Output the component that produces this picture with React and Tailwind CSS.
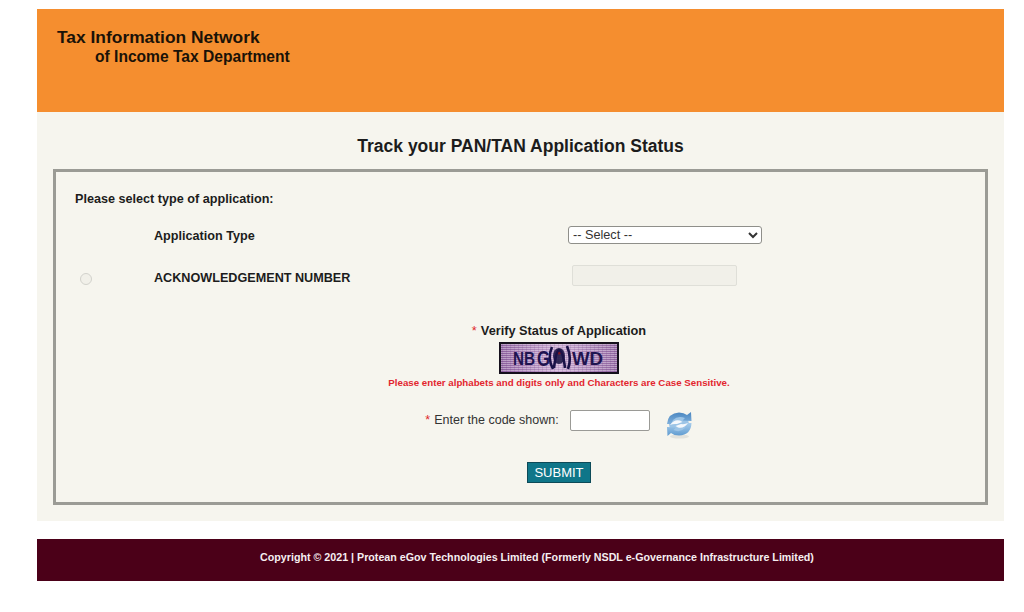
const captchaLines = Array.from({ length: 14 }, (_, i) => i * 2 + 2);
const captchaCols = Array.from({ length: 29 }, (_, i) => i * 4 + 3);

const Captcha = () => (
  <svg width="120" height="32" viewBox="0 0 120 32" className="block">
    <defs>
      <linearGradient id="capBg" x1="0" y1="0" x2="1" y2="0">
        <stop offset="0" stopColor="#8d5f9f" />
        <stop offset="0.5" stopColor="#c9a9d2" />
        <stop offset="1" stopColor="#8f639f" />
      </linearGradient>
    </defs>
    <rect width="120" height="32" fill="#15101c" />
    <rect x="2" y="2" width="116" height="28" fill="url(#capBg)" />
    {captchaLines.map((y) => (
      <rect key={y} x="2" y={y} width="116" height="0.8" fill="#f6ecf8" opacity="0.55" />
    ))}
    {captchaCols.map((x) => (
      <rect key={x} x={x} y="2" width="0.5" height="28" fill="#5d3a70" opacity="0.3" />
    ))}
    <text x="14" y="23" fontFamily="'Liberation Sans', sans-serif" fontWeight="700" fontSize="18" fill="#1f1450" textLength="22" lengthAdjust="spacingAndGlyphs">NB</text>
    <text x="38" y="24" fontFamily="'Liberation Sans', sans-serif" fontWeight="700" fontSize="22" fill="#1f1450" textLength="13" lengthAdjust="spacingAndGlyphs">G</text>
    <ellipse cx="60" cy="14" rx="6" ry="8" fill="#15103f" opacity="0.85" />
    <circle cx="60" cy="10" r="2.5" fill="#7a1522" />
    <path d="M53 5 Q48 16 54 27 M68 4 Q73 16 69 27 M55 26 Q57 9 60 8 Q64 9 66 26" fill="none" stroke="#1a1248" strokeWidth="2.6" />
    <text x="73" y="23" fontFamily="'Liberation Sans', sans-serif" fontWeight="700" fontSize="18" fill="#1f1450" textLength="31" lengthAdjust="spacingAndGlyphs">WD</text>
  </svg>
);

const RefreshIcon = () => (
  <svg width="27" height="28" viewBox="0 0 27 28" className="block">
    <defs>
      <linearGradient id="refTop" x1="0" y1="0" x2="0" y2="1">
        <stop offset="0" stopColor="#4a86c0" />
        <stop offset="1" stopColor="#7fb0dc" />
      </linearGradient>
      <linearGradient id="refBottom" x1="0" y1="0" x2="0" y2="1">
        <stop offset="0" stopColor="#a8cdec" />
        <stop offset="1" stopColor="#5f9bd0" />
      </linearGradient>
    </defs>
    <ellipse cx="13.5" cy="25.5" rx="9.5" ry="2" fill="#e2e2dc" />
    <circle cx="13" cy="13" r="10" fill="#9cc4e6" />
    {/* upper arrow */}
    <path d="M1 13 Q2 2 13 1.5 Q18 1.5 21 4 L25 1 L25.5 10 L16.5 9.5 L19 7 Q12 4 7 9 L5 13 Z" fill="url(#refTop)" />
    {/* lower arrow */}
    <path d="M25.5 12 Q25 24 13 24.5 Q8 24.5 5 22 L1.5 25 L1 16 L10 16.5 L7.5 19 Q14 22 19 17 L21 12 Z" fill="url(#refBottom)" />
    {/* white swooshes */}
    <path d="M4 14 Q8 8 14 9.5 L16.5 11 L11 13 Q7 12.5 4 14 Z" fill="#f5f8fc" />
    <path d="M22 12 Q18 18 12 16.5 L9.5 15 L15 13 Q19 13.5 22 12 Z" fill="#f5f8fc" />
  </svg>
);

export default function App() {
  return (
    <div className="min-h-[612px] bg-white pt-[9px] pl-[37px] pr-[20px] font-['Liberation_Sans',Arial,sans-serif]">
      <header className="h-[103px] bg-[#f58e2f] pl-[20px] pt-[17px] text-[#1a1208] font-bold">
        <div className="text-[17.4px] leading-[22px]">Tax Information Network</div>
        <div className="pl-[38px] text-[15.6px] leading-[18px]">of Income Tax Department</div>
      </header>

      <main className="h-[409px] bg-[#f6f5ee] px-[16px]">
        <h1 className="pt-[22px] h-[57px] text-center text-[17.5px] leading-[24px] font-bold text-[#1c1c1c]">
          Track your PAN/TAN Application Status
        </h1>

        <section className="h-[336px] border-[3px] border-[#9b9b95] pl-[19px] text-[#1c1c1c]">
          <p className="pt-[19px] text-[12.63px] leading-[16px] font-bold">Please select type of application:</p>

          <div className="mt-[18px] flex h-[20px] items-center">
            <span className="ml-[79px] w-[414px] pt-[2px] text-[12.63px] font-bold">Application Type</span>
            <select className="h-[18px] w-[194px] rounded-[3px] border border-[#8f8f8a] bg-white text-[12.7px] text-[#333]">
              <option>-- Select --</option>
            </select>
          </div>

          <div className="mt-[20px] flex h-[21px] items-start">
            <span className="ml-[5px] mt-[8px] h-[12px] w-[12px] rounded-full border border-[#d2d2cc] bg-[#f1f0e9]" />
            <span className="ml-[62px] mt-[5px] w-[418px] text-[12.63px] leading-[16px] font-bold">ACKNOWLEDGEMENT NUMBER</span>
            <input disabled className="h-[21px] w-[165px] rounded-[2px] border border-[#dfdfd8] bg-[#f1f0e9]" />
          </div>

          <div className="ml-[57px] mt-[37px] flex w-[854px] flex-col items-center">
            <div className="text-[12.75px] leading-[16px] font-bold">
              <span className="mr-[4px] font-normal text-[#e0262a]">*</span>Verify Status of Application
            </div>
            <div className="mt-[3px]">
              <Captcha />
            </div>
            <p className="mt-[2px] text-[9.72px] leading-[14px] font-bold text-[#e3262e]">
              Please enter alphabets and digits only and Characters are Case Sensitive.
            </p>

            <div className="mt-[20px] flex items-start">
              <label className="mt-[2px] text-[12.5px] leading-[16px] text-[#333]">
                <span className="mr-[4px] text-[#e0262a]">*</span>Enter the code shown:
              </label>
              <input className="ml-[11px] h-[21px] w-[80px] rounded-[2px] border border-[#9a9a96] bg-white" />
              <div className="ml-[16px] mt-[1px]">
                <RefreshIcon />
              </div>
            </div>

            <button className="mt-[23px] h-[21px] w-[64px] border border-[#0d4a58] bg-[#0f7689] text-[13px] leading-[19px] text-white">
              SUBMIT
            </button>
          </div>
        </section>
      </main>

      <footer className="mt-[18px] flex h-[42px] items-center justify-center bg-[#4b0018] pb-[6px] pl-[33px] text-[10.7px] font-bold text-[#f5eef0]">
        Copyright © 2021 | Protean eGov Technologies Limited (Formerly NSDL e-Governance Infrastructure Limited)
      </footer>
    </div>
  );
}
